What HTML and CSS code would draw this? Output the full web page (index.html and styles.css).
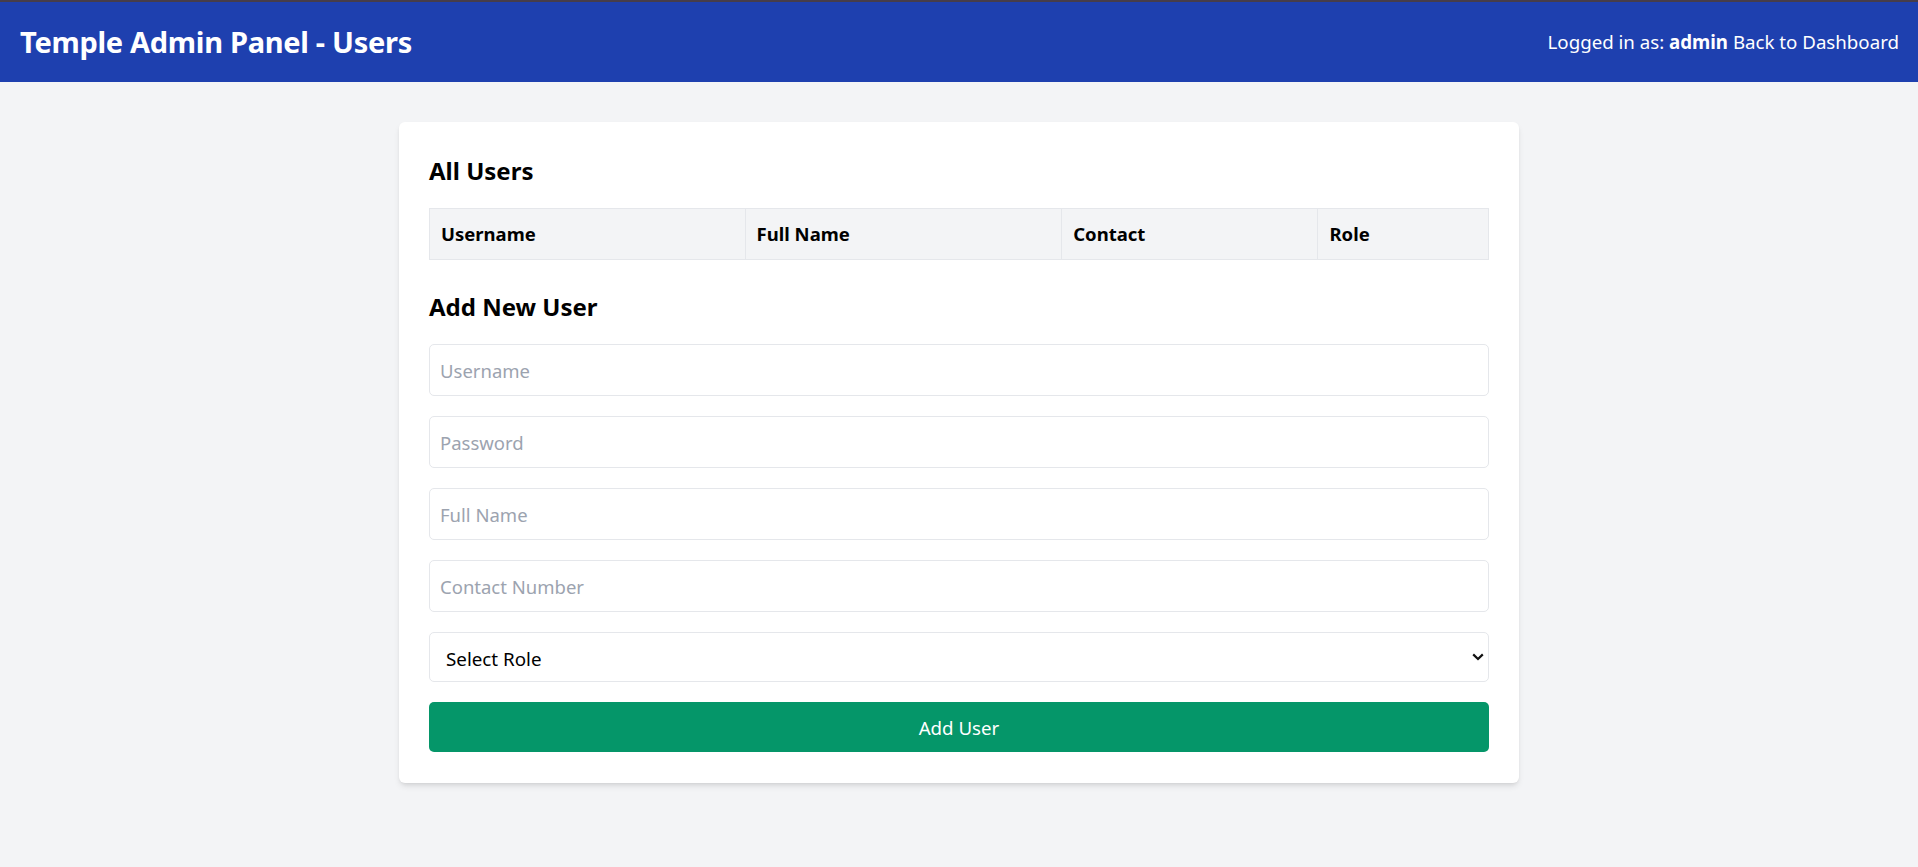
FILE: index.html
```html
<!DOCTYPE html>
<html lang="en">
<head>
<meta charset="utf-8">
<title>Temple Admin Panel - Users</title>
<link rel="stylesheet" href="styles.css">
</head>
<body>
<header class="topbar">
  <h1 class="brand">Temple Admin Panel - Users</h1>
  <div class="session">Logged in as: <strong>admin</strong> <a href="#" class="back">Back to Dashboard</a></div>
</header>
<main class="page">
  <section class="card">
    <h2 class="section-title">All Users</h2>
    <table class="users">
      <thead>
        <tr>
          <th class="col-user">Username</th>
          <th class="col-name">Full Name</th>
          <th class="col-contact">Contact</th>
          <th class="col-role">Role</th>
        </tr>
      </thead>
      <tbody></tbody>
    </table>
    <h2 class="section-title add-title">Add New User</h2>
    <form class="user-form">
      <input class="field" type="text" placeholder="Username">
      <input class="field" type="password" placeholder="Password">
      <input class="field" type="text" placeholder="Full Name">
      <input class="field" type="text" placeholder="Contact Number">
      <div class="select-wrap">
        <select class="field select">
          <option>Select Role</option>
          <option>admin</option>
          <option>staff</option>
        </select>
        <svg class="chevron" width="12" height="8" viewBox="0 0 12 8" aria-hidden="true"><path d="M1.2 1.4 L6 6 L10.8 1.4" fill="none" stroke="#111" stroke-width="2.2"/></svg>
      </div>
      <button type="button" class="submit">Add User</button>
    </form>
  </section>
</main>
</body>
</html>
```
FILE: styles.css
```css
* { box-sizing: border-box; }
html, body { margin: 0; padding: 0; }
body {
  background: #f3f4f6;
  font-family: "Noto Sans", "Open Sans", sans-serif;
  color: #000;
  min-height: 867px;
}
.topbar {
  border-top: 2px solid #463d4b;
  background: #1e40af;
  color: #fff;
  height: 82px;
  padding: 0 19px 0 20px;
  display: flex;
  align-items: center;
  justify-content: space-between;
}
.brand {
  margin: 0;
  font-size: 29px;
  font-weight: 700;
  line-height: 40px;
  letter-spacing: -0.3px;
}
.session {
  font-size: 18.7px;
  line-height: 30px;
}
.session strong { font-weight: 700; }
.back { color: #fff; text-decoration: none; }
.page {
  padding-top: 40px;
  display: flex;
  justify-content: center;
}
.card {
  width: 1120px;
  background: #fff;
  border-radius: 6px;
  box-shadow: 0 4px 6px -1px rgba(0,0,0,0.1), 0 2px 4px -2px rgba(0,0,0,0.1);
  padding: 31px 30px 31px;
}
.section-title {
  margin: 0 0 20px;
  font-size: 24px;
  line-height: 35px;
  font-weight: 700;
}
.add-title { margin-top: 29px; }
.users {
  width: 100%;
  border-collapse: collapse;
}
.users th {
  background: #f3f4f6;
  border: 1px solid #e5e7eb;
  text-align: left;
  font-size: 18.5px;
  font-weight: 700;
  line-height: 30px;
  padding: 10px 11px;
}
.col-user { width: 29.8%; }
.col-name { width: 29.9%; }
.col-contact { width: 24.2%; }
.col-role { width: 16.1%; }
.user-form {
  display: flex;
  flex-direction: column;
  gap: 20px;
}
.field {
  display: block;
  width: 100%;
  height: 52px;
  border: 1px solid #e5e7eb;
  border-radius: 5px;
  padding: 10px 10px;
  font-family: inherit;
  font-size: 18.5px;
  line-height: 30px;
  color: #000;
  background: #fff;
  outline: none;
}
.field::placeholder { color: #9ca3af; }
.select-wrap { position: relative; }
.select {
  height: 50px;
  appearance: none;
  -webkit-appearance: none;
  padding: 11px 14px 7px 16px;
  font-size: 18.8px;
}
.chevron {
  position: absolute;
  right: 5px;
  top: 21px;
  pointer-events: none;
}
.submit {
  height: 50px;
  border: none;
  border-radius: 5px;
  background: #059669;
  color: #fff;
  font-family: inherit;
  font-size: 18.7px;
  line-height: 30px;
  padding-top: 2px;
  cursor: pointer;
}
```
